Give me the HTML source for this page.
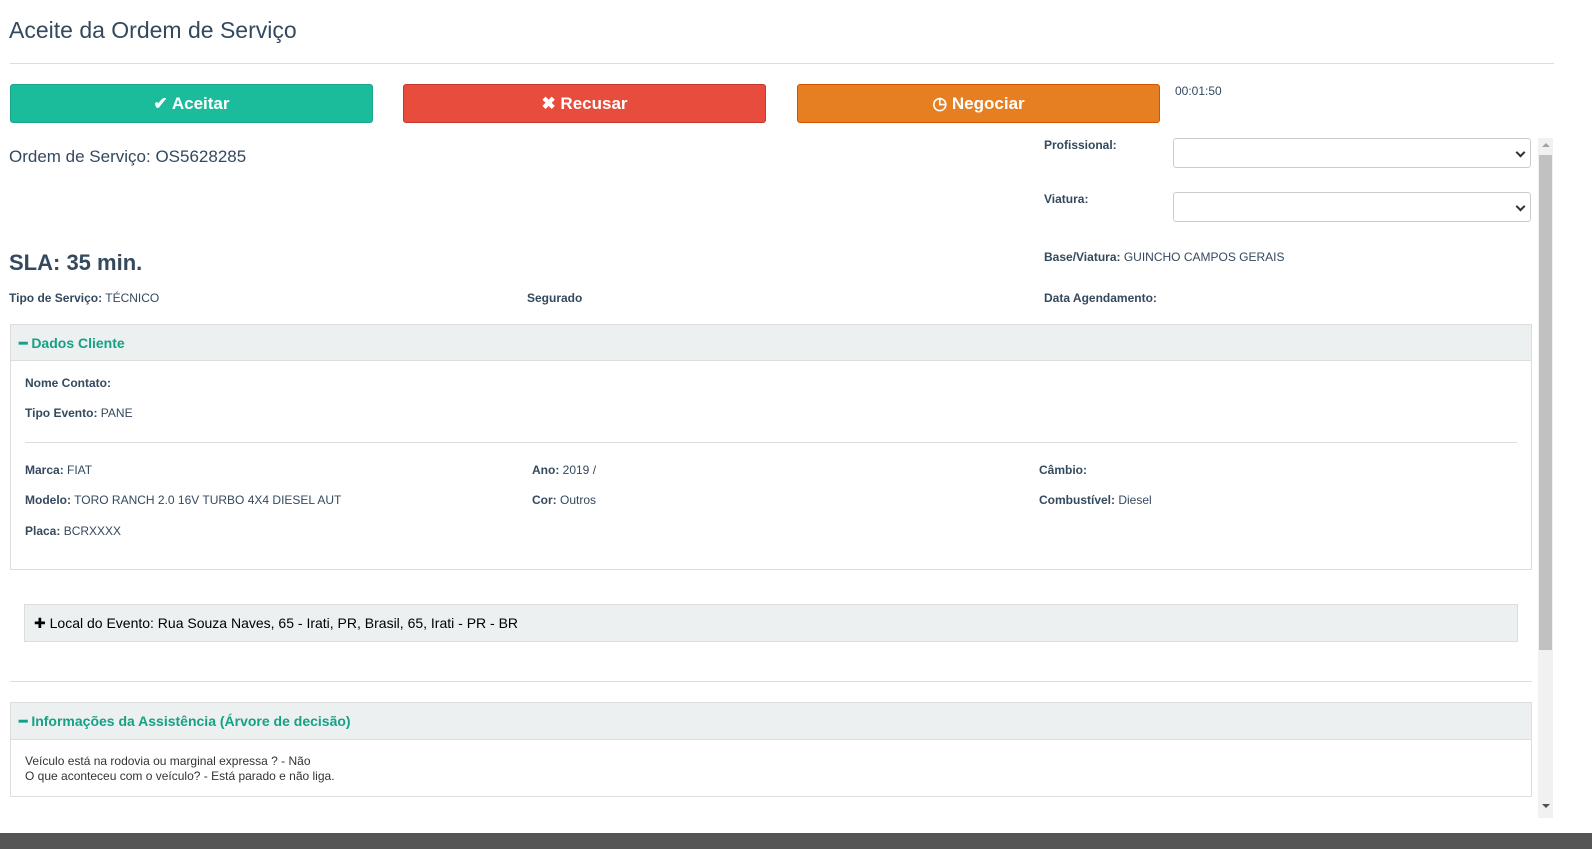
<!DOCTYPE html>
<html><head><meta charset="utf-8"><style>
*{box-sizing:border-box}
body{margin:0;width:1592px;height:849px;overflow:hidden;background:#fff;font-family:"Liberation Sans",sans-serif;color:#34495e;position:relative}
.a{position:absolute;white-space:nowrap}
.s{font-size:12px}
b{font-weight:bold}
.btn{position:absolute;top:84px;height:39px;width:363px;border-radius:3px;color:#fff;font-weight:bold;font-size:17px;text-align:center;line-height:37px}
.sel{position:absolute;left:1173px;width:358px;height:30px;border:1px solid #ccc;border-radius:3px;background:#fff}
.sel:after{content:"";position:absolute;right:6px;top:10px;width:5px;height:5px;border-right:2px solid #333;border-bottom:2px solid #333;transform:rotate(45deg)}
.ph{position:absolute;background:#ecf0f1;border:1px solid #ddd}
.box{position:absolute;border:1px solid #ddd}
.g{color:#16a085;font-weight:bold;font-size:14px}
</style></head><body>
<div class="a" style="left:9px;top:17px;font-size:23px">Aceite da Ordem de Serviço</div>
<div class="a" style="left:10px;top:63px;width:1544px;height:1px;background:#ddd"></div>
<div class="btn" style="left:10px;background:#1abc9c;border:1px solid #17a689">✔ Aceitar</div>
<div class="btn" style="left:403px;background:#e74c3c;border:1px solid #c0392b">✖ Recusar</div>
<div class="btn" style="left:797px;background:#e67e22;border:1px solid #d35400">◷ Negociar</div>
<div class="a s" style="left:1175px;top:84px;font-size:12px">00:01:50</div>
<div class="a" style="left:9px;top:147px;font-size:17px">Ordem de Serviço: OS5628285</div>
<div class="a" style="left:9px;top:250px;font-size:22px;font-weight:bold">SLA: 35 min.</div>
<div class="a s" style="left:9px;top:291px"><b>Tipo de Serviço:</b> TÉCNICO</div>
<div class="a s" style="left:527px;top:291px"><b>Segurado</b></div>
<div class="a s" style="left:1044px;top:291px"><b>Data Agendamento:</b></div>
<div class="a s" style="left:1044px;top:138px"><b>Profissional:</b></div>
<div class="a s" style="left:1044px;top:192px"><b>Viatura:</b></div>
<div class="sel" style="top:138px"></div>
<div class="sel" style="top:192px"></div>
<div class="a s" style="left:1044px;top:250px"><b>Base/Viatura:</b> GUINCHO CAMPOS GERAIS</div>

<div class="box" style="left:10px;top:324px;width:1522px;height:246px"></div>
<div class="ph" style="left:10px;top:324px;width:1522px;height:37px"></div>
<div class="a g" style="left:19px;top:335px">━ Dados Cliente</div>
<div class="a s" style="left:25px;top:376px"><b>Nome Contato:</b></div>
<div class="a s" style="left:25px;top:406px"><b>Tipo Evento:</b> PANE</div>
<div class="a" style="left:25px;top:442px;width:1492px;height:1px;background:#ddd"></div>
<div class="a s" style="left:25px;top:463px"><b>Marca:</b> FIAT</div>
<div class="a s" style="left:25px;top:493px"><b>Modelo:</b> TORO RANCH 2.0 16V TURBO 4X4 DIESEL AUT</div>
<div class="a s" style="left:25px;top:524px"><b>Placa:</b> BCRXXXX</div>
<div class="a s" style="left:532px;top:463px"><b>Ano:</b> 2019 /</div>
<div class="a s" style="left:532px;top:493px"><b>Cor:</b> Outros</div>
<div class="a s" style="left:1039px;top:463px"><b>Câmbio:</b></div>
<div class="a s" style="left:1039px;top:493px"><b>Combustível:</b> Diesel</div>

<div class="ph" style="left:24px;top:604px;width:1494px;height:38px"></div>
<div class="a" style="left:34px;top:615px;font-size:14px;color:#000">✚ Local do Evento: Rua Souza Naves, 65 - Irati, PR, Brasil, 65, Irati - PR - BR</div>
<div class="a" style="left:10px;top:681px;width:1522px;height:1px;background:#ddd"></div>

<div class="box" style="left:10px;top:702px;width:1522px;height:95px"></div>
<div class="ph" style="left:10px;top:702px;width:1522px;height:38px"></div>
<div class="a g" style="left:19px;top:713px">━ Informações da Assistência (Árvore de decisão)</div>
<div class="a s" style="left:25px;top:754px;line-height:15px;color:#333">Veículo está na rodovia ou marginal expressa ? - Não<br>O que aconteceu com o veículo? - Está parado e não liga.</div>

<div class="a" style="left:1538px;top:138px;width:15px;height:680px;background:#f1f1f1"></div>
<div class="a" style="left:1539px;top:155px;width:13px;height:495px;background:#c1c1c1"></div>
<div class="a" style="left:1542px;top:143px;width:0;height:0;border:4px solid transparent;border-bottom-color:#a3a3a3;border-top:0"></div>
<div class="a" style="left:1542px;top:804px;width:0;height:0;border:4px solid transparent;border-top-color:#505050;border-bottom:0"></div>
<div class="a" style="left:0;top:833px;width:1592px;height:16px;background:#555"></div>
</body></html>
